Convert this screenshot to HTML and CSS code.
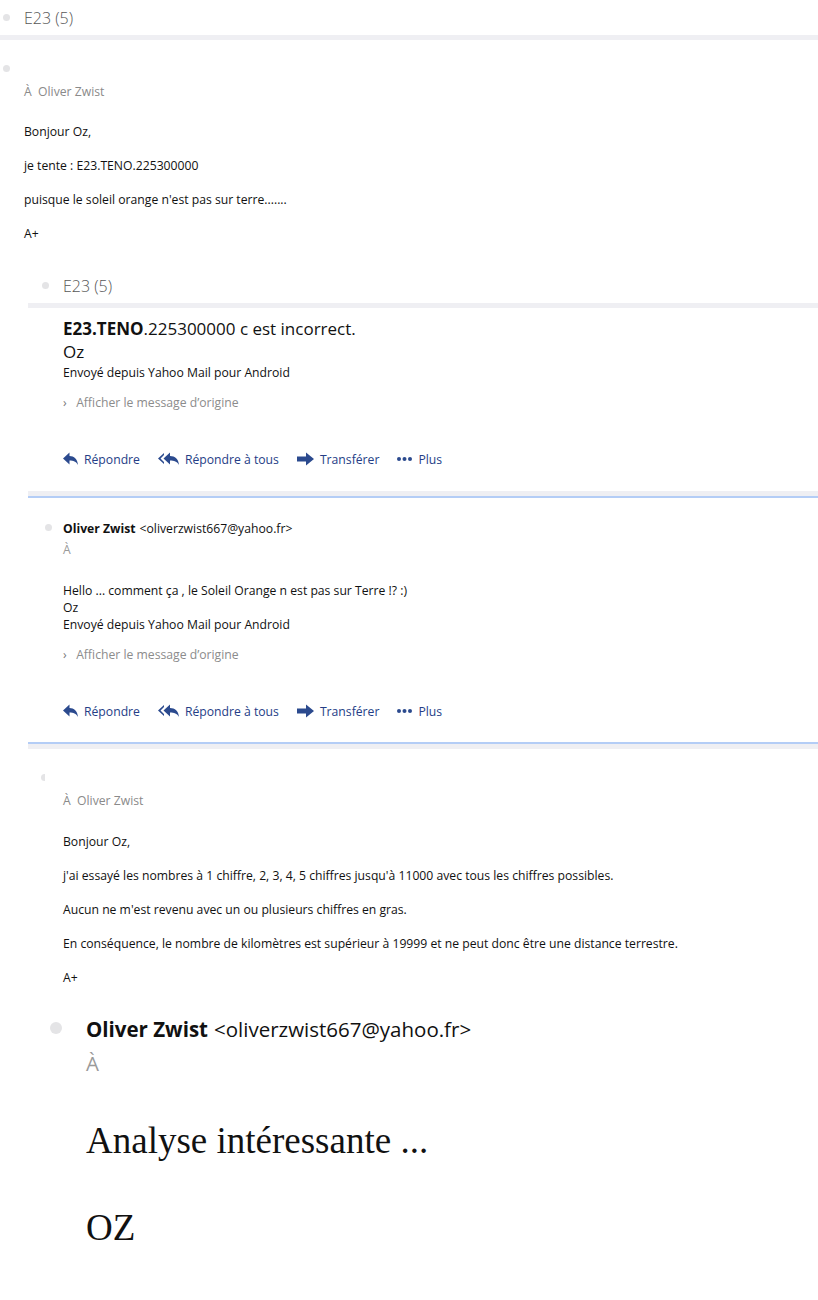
FILE: index.html
```html
<!DOCTYPE html>
<html lang="fr">
<head>
  <meta charset="UTF-8">
  <meta name="viewport" content="width=device-width, initial-scale=1.0">
  <title>E23 (5)</title>
  <link rel="stylesheet" href="styles.css">
</head>
<body>
  <div class="thread-head">
    <span class="dot"></span>
    <span class="subject">E23 (5)</span>
  </div>
  <div class="bar"></div>

  <div class="msg">
    <div class="msg-from"><span class="dot"></span></div>
    <div class="msg-to">À&nbsp; Oliver Zwist</div>
    <div class="msg-body">
      <p>Bonjour Oz,</p>
      <p>je tente : E23.TENO.225300000</p>
      <p>puisque le soleil orange n'est pas sur terre.......</p>
      <p>A+</p>
    </div>
  </div>

  <div class="quoted">
    <div class="thread-head">
      <span class="dot"></span>
      <span class="subject">E23 (5)</span>
    </div>
    <div class="bar"></div>

    <div class="reply">
      <div class="reply-text">
        <div class="big"><b>E23.TENO</b>.225300000 c est incorrect.</div>
        <div class="big">Oz</div>
        <div class="after-big">Envoyé depuis Yahoo Mail pour Android</div>
      </div>
      <div class="origin"><span class="chev">›</span> Afficher le message d’origine</div>
      <div class="actions">
        <a class="action">
          <svg width="15" height="14" viewBox="0 0 15 14"><path d="M0 6.5 L6.5 0.5 V4 C11 4 14.5 7 15 13 C13 9.5 10.5 8.5 6.5 8.5 V12.5 Z" fill="#2b4a8e"/></svg>
          Répondre
        </a>
        <a class="action">
          <svg width="21" height="14" viewBox="0 0 21 14"><path d="M0 6.5 L6 1 V3 L2.5 6.5 L6 10 V12 Z" fill="#2b4a8e"/><path d="M5.5 6.5 L12 0.5 V4 C17 4 20.5 7 21 13 C19 9.5 16 8.5 12 8.5 V12.5 Z" fill="#2b4a8e"/></svg>
          Répondre à tous
        </a>
        <a class="action">
          <svg width="17" height="14" viewBox="0 0 17 14"><path d="M0 4.5 H9 V0.5 L17 7 L9 13.5 V9.5 H0 Z" fill="#2b4a8e"/></svg>
          Transférer
        </a>
        <a class="action">
          <svg width="15" height="14" viewBox="0 0 15 14"><circle cx="2" cy="7" r="2" fill="#2b4a8e"/><circle cx="7.5" cy="7" r="2" fill="#2b4a8e"/><circle cx="13" cy="7" r="2" fill="#2b4a8e"/></svg>
          Plus
        </a>
      </div>
    </div>
    <div class="sep"></div>

    <div class="reply">
      <div class="sender"><span class="dot"></span><b>Oliver Zwist</b> &lt;oliverzwist667@yahoo.fr&gt;</div>
      <div class="sender-to">À</div>
      <div class="reply-text plain">
        <div>Hello ... comment ça , le Soleil Orange n est pas sur Terre !? :)</div>
        <div>Oz</div>
        <div>Envoyé depuis Yahoo Mail pour Android</div>
      </div>
      <div class="origin"><span class="chev">›</span> Afficher le message d’origine</div>
      <div class="actions">
        <a class="action">
          <svg width="15" height="14" viewBox="0 0 15 14"><path d="M0 6.5 L6.5 0.5 V4 C11 4 14.5 7 15 13 C13 9.5 10.5 8.5 6.5 8.5 V12.5 Z" fill="#2b4a8e"/></svg>
          Répondre
        </a>
        <a class="action">
          <svg width="21" height="14" viewBox="0 0 21 14"><path d="M0 6.5 L6 1 V3 L2.5 6.5 L6 10 V12 Z" fill="#2b4a8e"/><path d="M5.5 6.5 L12 0.5 V4 C17 4 20.5 7 21 13 C19 9.5 16 8.5 12 8.5 V12.5 Z" fill="#2b4a8e"/></svg>
          Répondre à tous
        </a>
        <a class="action">
          <svg width="17" height="14" viewBox="0 0 17 14"><path d="M0 4.5 H9 V0.5 L17 7 L9 13.5 V9.5 H0 Z" fill="#2b4a8e"/></svg>
          Transférer
        </a>
        <a class="action">
          <svg width="15" height="14" viewBox="0 0 15 14"><circle cx="2" cy="7" r="2" fill="#2b4a8e"/><circle cx="7.5" cy="7" r="2" fill="#2b4a8e"/><circle cx="13" cy="7" r="2" fill="#2b4a8e"/></svg>
          Plus
        </a>
      </div>
    </div>
    <div class="sep flip"></div>

    <div class="msg inner">
      <div class="msg-from"><span class="dot half"></span></div>
      <div class="msg-to">À&nbsp; Oliver Zwist</div>
      <div class="msg-body">
        <p>Bonjour Oz,</p>
        <p>j'ai essayé les nombres à 1 chiffre, 2, 3, 4, 5 chiffres jusqu'à 11000 avec tous les chiffres possibles.</p>
        <p>Aucun ne m'est revenu avec un ou plusieurs chiffres en gras.</p>
        <p>En conséquence, le nombre de kilomètres est supérieur à 19999 et ne peut donc être une distance terrestre.</p>
        <p>A+</p>
      </div>
    </div>
  </div>

  <div class="zoomed">
    <div class="sender"><span class="dot"></span><b>Oliver Zwist</b> &lt;oliverzwist667@yahoo.fr&gt;</div>
    <div class="sender-to">À</div>
    <div class="serif">
      <p>Analyse intéressante ...</p>
      <p>OZ</p>
    </div>
  </div>
</body>
</html>
```

FILE: styles.css
```css
body { margin: 0; font-family: "Open Sans", "Noto Sans", sans-serif; font-size: 12.2px; color: #111; background: #fff; }
p { margin: 0; }
b { font-weight: 700; }

.dot { display: inline-block; width: 7px; height: 7px; border-radius: 50%; background: #e4e4e6; flex: none; }

.thread-head { display: flex; align-items: center; height: 35px; padding-left: 3px; }
.thread-head .dot { margin-right: 14px; }
.subject { font-size: 16px; font-weight: 300; color: #575757; }
.bar { height: 5px; background: #efeff3; }

.msg { padding: 23px 0 0 24px; }
.msg-from { height: 10px; margin-left: -21px; display: flex; align-items: center; }
.msg-to { margin-top: 10px; line-height: 17px; color: #8a8a8a; }
.msg-body { margin-top: 23px; line-height: 17px; }
.msg-body p { margin-bottom: 17px; }
.msg-body p:last-child { margin-bottom: 0; }

.quoted { margin-left: 28px; margin-top: 26px; }
.quoted .thread-head { padding-left: 14px; }
.quoted .thread-head .dot { margin-right: 14px; }

.reply { padding-left: 35px; }
.reply-text { padding-top: 9px; line-height: 17px; }
.reply-text .big { font-size: 17px; line-height: 23px; }
.reply-text .after-big { margin-top: 1px; }
.reply-text.plain { margin-top: 24px; padding-top: 0; }
.origin { margin-top: 13px; line-height: 17px; color: #8c8c8c; }
.chev { display: inline-block; width: 10px; color: #777; }
.actions { display: flex; gap: 18px; margin-top: 38px; height: 20px; align-items: center; }
.action { display: flex; align-items: center; gap: 6px; color: #253d86; }

.sep { margin-top: 22px; height: 5px; background: #efeff3; border-bottom: 2px solid #b4cdf6; }
.sep.flip { margin-top: 21px; border-bottom: none; border-top: 2px solid #b4cdf6; }

.sender { position: relative; display: flex; align-items: center; margin-top: 22px; line-height: 17px; }
.sender .dot { position: absolute; left: -18px; top: 4px; }
.sender b { margin-right: 4px; }
.sender-to { margin-top: 4px; line-height: 17px; color: #9a9a9a; }

.msg.inner { padding-left: 35px; padding-top: 23px; }
.msg.inner .msg-from { margin-left: -22px; }
.msg.inner .msg-body { margin-top: 24px; }
.dot.half { width: 4px; border-radius: 4px 0 0 4px; }

.zoomed { padding-left: 86px; padding-top: 29px; font-size: 20.5px; }
.zoomed .sender { line-height: 28px; margin-top: 0; }
.zoomed .sender .dot { width: 12px; height: 12px; left: -36px; top: 7px; }
.zoomed .sender b { margin-right: 6px; }
.zoomed .sender-to { line-height: 28px; margin-top: 6px; }
.serif { font-family: "Liberation Serif", serif; font-size: 37px; line-height: 44px; margin-top: 42px; }
.serif p { margin-bottom: 43px; }
```
